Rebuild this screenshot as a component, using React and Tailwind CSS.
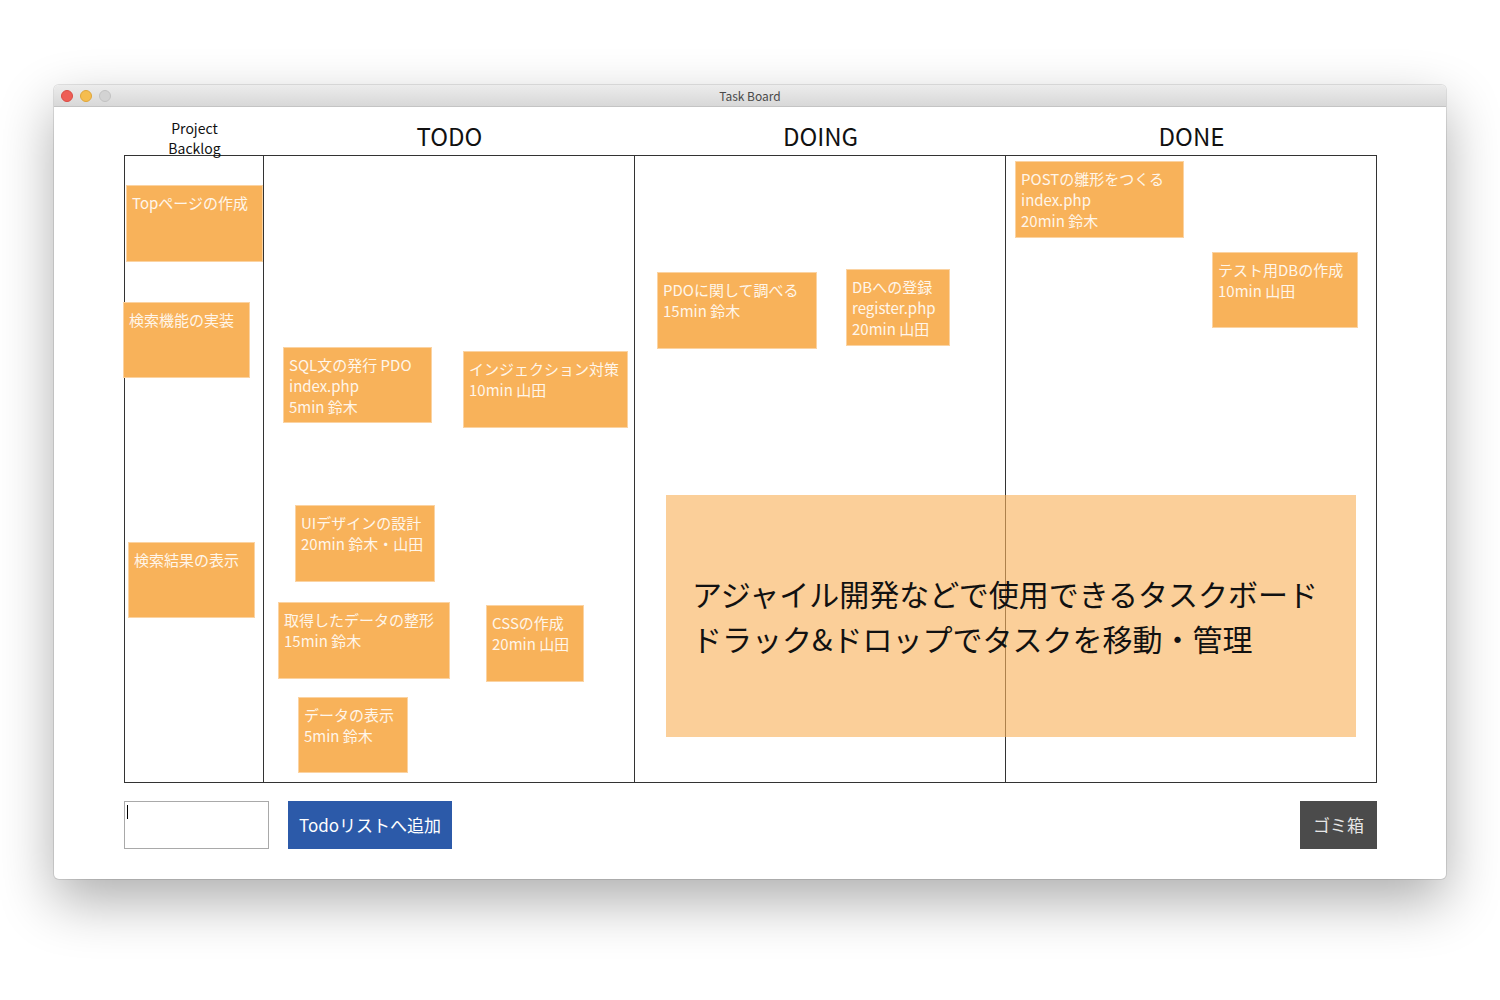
import React from "react";

const FONT = { fontFamily: '"Noto Sans CJK JP", "Noto Sans", sans-serif' };

// sticky notes, positioned inside the board (x/y relative to board inner edge)
const cards = [
  { x: 1, y: 29, w: 137, h: 77, lines: ["Topページの作成"] },
  { x: -2, y: 146, w: 127, h: 76, lines: ["検索機能の実装"] },
  { x: 3, y: 386, w: 127, h: 76, lines: ["検索結果の表示"] },
  { x: 158, y: 191, w: 149, h: 76, lines: ["SQL文の発行 PDO", "index.php", "5min 鈴木"] },
  { x: 338, y: 195, w: 165, h: 77, lines: ["インジェクション対策", "10min 山田"] },
  { x: 170, y: 349, w: 140, h: 77, lines: ["UIデザインの設計", "20min 鈴木・山田"] },
  { x: 153, y: 446, w: 172, h: 77, lines: ["取得したデータの整形", "15min 鈴木"] },
  { x: 361, y: 449, w: 98, h: 77, lines: ["CSSの作成", "20min 山田"] },
  { x: 173, y: 541, w: 110, h: 76, lines: ["データの表示", "5min 鈴木"] },
  { x: 532, y: 116, w: 160, h: 77, lines: ["PDOに関して調べる", "15min 鈴木"] },
  { x: 721, y: 113, w: 104, h: 77, lines: ["DBへの登録", "register.php", "20min 山田"] },
  { x: 890, y: 5, w: 169, h: 77, lines: ["POSTの雛形をつくる", "index.php", "20min 鈴木"] },
  { x: 1087, y: 96, w: 146, h: 76, lines: ["テスト用DBの作成", "10min 山田"] },
];

function Card({ card }) {
  return (
    <div
      className="absolute bg-[#f8b25a] border border-[#fbd3a2] pl-[5px] pt-[6px] text-[15px] leading-[21px] text-[#fff6ea] whitespace-nowrap"
      style={{ left: card.x, top: card.y, width: card.w, height: card.h }}
    >
      {card.lines.map((l, i) => (
        <div key={i}>{l}</div>
      ))}
    </div>
  );
}

export default function App() {
  return (
    <div className="w-full h-[1000px] bg-white pt-[85px] pl-[54px]" style={FONT}>
      <div className="w-[1392px] h-[794px] bg-white rounded-[5px] overflow-hidden shadow-[0_0_0_1px_rgba(0,0,0,0.1),0_22px_55px_rgba(0,0,0,0.32)]">
        {/* title bar */}
        <div className="relative h-[22px] bg-gradient-to-b from-[#ececec] to-[#d8d8d8] border-b border-[#c4c4c4] flex items-center justify-center">
          <div className="absolute left-[7px] top-[5px] flex gap-[7px]">
            <span className="w-[12px] h-[12px] rounded-full bg-[#ee5e56] border border-[#d94b44]" />
            <span className="w-[12px] h-[12px] rounded-full bg-[#f5bd4f] border border-[#dea53a]" />
            <span className="w-[12px] h-[12px] rounded-full bg-[#d3d3d3] border border-[#c2c2c2]" />
          </div>
          <span className="text-[12px] text-[#4a4a4a]">Task Board</span>
        </div>

        <div className="pl-[70px]">
          {/* column headers */}
          <div className="flex h-[48px] w-[1253px] pl-[1px]">
            <div className="w-[139px] flex items-end justify-center">
              <div className="text-[14px] leading-[20px] text-center text-[#111] mb-[-3px] relative z-10">
                Project
                <br />
                Backlog
              </div>
            </div>
            {["TODO", "DOING", "DONE"].map((h) => (
              <div key={h} className="w-[371px] flex items-end justify-center pb-[3px]">
                <span className="text-[24px] leading-[32px] text-[#111]">{h}</span>
              </div>
            ))}
          </div>

          {/* board */}
          <div className="relative w-[1253px] h-[628px] border border-[#333] flex">
            <div className="w-[139px] border-r border-[#333]" />
            <div className="w-[371px] border-r border-[#333]" />
            <div className="w-[371px] border-r border-[#333]" />
            <div className="flex-1" />

            {cards.map((c, i) => (
              <Card key={i} card={c} />
            ))}

            <div className="absolute left-[541px] top-[339px] w-[690px] h-[242px] bg-[rgba(248,178,90,0.62)] flex flex-col justify-center pl-[26px] text-[30px] leading-[45px] text-[#111]">
              <div>アジャイル開発などで使用できるタスクボード</div>
              <div>ドラック&amp;ドロップでタスクを移動・管理</div>
            </div>
          </div>

          {/* controls */}
          <div className="flex items-start mt-[18px] w-[1253px]">
            <div className="relative w-[145px] h-[48px] border border-[#a9a9a9]">
              <span className="absolute left-[2px] top-[3px] w-[1px] h-[14px] bg-black" />
            </div>
            <button className="ml-[19px] w-[164px] h-[48px] bg-[#2c5aa9] text-white text-[17px]">
              Todoリストへ追加
            </button>
            <button className="ml-auto w-[77px] h-[48px] bg-[#4b4b4b] text-[#e6e6e6] text-[17px]">
              ゴミ箱
            </button>
          </div>
        </div>
      </div>
    </div>
  );
}
